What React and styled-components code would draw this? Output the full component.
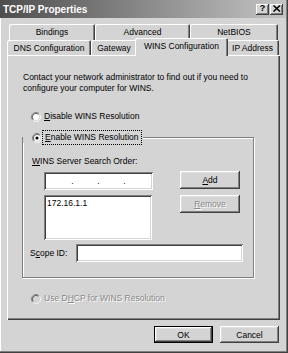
import React from 'react'
import styled, { createGlobalStyle } from 'styled-components'

const GlobalStyle = createGlobalStyle`
  html, body {
    margin: 0;
    padding: 0;
    background: #d4d4d4;
  }
  body {
    font-family: "Liberation Sans", Arial, sans-serif;
    font-size: 8.5px;
    color: #000;
  }
  * {
    box-sizing: border-box;
  }
`

const Window = styled.div`
  width: 288px;
  height: 353px;
  display: flex;
  flex-direction: column;
  background: #d4d4d4;
  box-shadow: inset -1px -1px #404040, inset -2px -2px #808080, inset 1px 0 #fff;
`

const TitleBar = styled.div`
  height: 18px;
  margin-right: 2px;
  display: flex;
  align-items: center;
  padding: 0 3px 0 3px;
  background: linear-gradient(to right, #4e4e4e, #c4c4c4);
`

const TitleText = styled.span`
  color: #fff;
  font-weight: bold;
  font-size: 10px;
`

const CaptionButtons = styled.div`
  margin-left: auto;
  display: flex;
  gap: 1px;
`

const CaptionButton = styled.div`
  width: 13px;
  height: 11px;
  display: flex;
  align-items: center;
  justify-content: center;
  background: #d4d4d4;
  box-shadow: inset -1px -1px #404040, inset 1px 1px #fff, inset -2px -2px #808080;
  font-weight: bold;
  font-size: 9px;
  line-height: 1;
  padding-bottom: 1px;
`

const Body = styled.div`
  display: flex;
  flex-direction: column;
  padding: 6px 8px 0 7px;
`

const TabStrip = styled.div`
  display: flex;
  flex-direction: column;
`

const TabRow = styled.div`
  display: flex;
  align-items: flex-end;
  height: ${(p) => p.$h}px;
  margin-left: ${(p) => p.$indent || 0}px;
`

const Tab = styled.div`
  width: ${(p) => p.$w + (p.$active ? 4 : 0)}px;
  height: ${(p) => (p.$active ? 18 : p.$h)}px;
  margin: ${(p) => (p.$active ? '0 -2px -1px -2px' : '0')};
  position: relative;
  z-index: ${(p) => (p.$active ? 2 : 0)};
  display: flex;
  align-items: center;
  justify-content: center;
  padding-bottom: ${(p) => (p.$active ? 2 : 0)}px;
  background: #d4d4d4;
  border-radius: 2px 2px 0 0;
  box-shadow: inset 1px 1px #fff, inset -1px 0 #404040, inset -2px 0 #808080;
  white-space: nowrap;
`

const Panel = styled.div`
  height: 265px;
  display: flex;
  flex-direction: column;
  padding: 17px 26px 0 15px;
  box-shadow: inset 1px 1px #fff, inset -1px -1px #404040, inset -2px -2px #808080;
`

const Info = styled.p`
  margin: 0 0 0 1px;
  line-height: 11px;
`

const RadioRow = styled.div`
  display: flex;
  align-items: center;
  gap: 2px;
  height: 11px;
  margin-top: ${(p) => p.$mt || 0}px;
  margin-left: 9px;
  color: ${(p) => (p.$disabled ? '#878787' : '#000')};
  text-shadow: ${(p) => (p.$disabled ? '1px 1px #fff' : 'none')};
`

const RadioLabel = styled.span`
  padding: 0 1px;
  line-height: 11px;
  outline: ${(p) => (p.$focus ? '1px dotted #000' : 'none')};
  outline-offset: 1px;
  white-space: nowrap;
`

const GroupBox = styled.div`
  margin-top: 15px;
  height: 141px;
  display: flex;
  flex-direction: column;
  border: 1px solid #808080;
  box-shadow: inset 1px 1px #fff, 1px 1px #fff;
`

const Legend = styled.div`
  align-self: flex-start;
  margin: -6px 0 0 0;
  padding-right: 3px;
  background: #d4d4d4;
`

const FieldLabel = styled.div`
  margin: ${(p) => p.$m || 0};
  width: ${(p) => (p.$w ? `${p.$w}px` : 'auto')};
  line-height: 11px;
  white-space: nowrap;
`

const Row = styled.div`
  display: flex;
  align-items: ${(p) => p.$align || 'flex-start'};
  margin: ${(p) => p.$m};
`

const Sunken = styled.div`
  width: ${(p) => p.$w}px;
  height: ${(p) => p.$h}px;
  background: #fff;
  box-shadow: inset 1px 1px #808080, inset -1px -1px #fff, inset 2px 2px #404040,
    inset -2px -2px #d4d4d4;
`

const IpField = styled(Sunken)`
  display: flex;
  align-items: center;
  padding: 0 4px;
`

const IpPart = styled.span`
  flex: 1;
`

const IpDot = styled.span`
  width: 3px;
  text-align: center;
  line-height: 1;
`

const ListBox = styled(Sunken)`
  padding: 3px;
  line-height: 11px;
`

const Button = styled.div`
  width: ${(p) => p.$w}px;
  height: ${(p) => p.$h}px;
  margin: ${(p) => p.$m || 0};
  display: flex;
  align-items: center;
  justify-content: center;
  background: #d4d4d4;
  border: ${(p) => (p.$default ? '1px solid #000' : 'none')};
  box-shadow: inset -1px -1px #404040, inset 1px 1px #fff, inset -2px -2px #808080,
    inset 2px 2px #dfdfdf;
  color: ${(p) => (p.$disabled ? '#878787' : '#000')};
  text-shadow: ${(p) => (p.$disabled ? '1px 1px #fff' : 'none')};
`

const Footer = styled.div`
  display: flex;
  justify-content: flex-end;
  gap: 7px;
  margin: 6px 1px 0 0;
`

function Radio({ checked, disabled }) {
  return (
    <svg width="10" height="10" viewBox="0 0 12 12">
      <circle cx="6" cy="6" r="4.2" fill={disabled ? '#d4d4d4' : '#fff'} />
      <path d="M2.11 9.89 A5.5 5.5 0 0 1 9.89 2.11" fill="none" stroke="#808080" />
      <path d="M9.89 2.11 A5.5 5.5 0 0 1 2.11 9.89" fill="none" stroke="#fff" />
      <path d="M2.82 9.18 A4.5 4.5 0 0 1 9.18 2.82" fill="none" stroke="#404040" />
      <path d="M9.18 2.82 A4.5 4.5 0 0 1 2.82 9.18" fill="none" stroke="#d4d4d4" />
      {checked && <circle cx="6" cy="6" r="1.9" fill="#000" />}
    </svg>
  )
}

const topTabs = [
  { label: 'Bindings', w: 86 },
  { label: 'Advanced', w: 95 },
  { label: 'NetBIOS', w: 88 },
]

const bottomTabs = [
  { label: 'DNS Configuration', w: 84 },
  { label: 'Gateway', w: 46 },
  { label: 'WINS Configuration', w: 89, active: true },
  { label: 'IP Address', w: 53 },
]

export default function App() {
  return (
    <>
      <GlobalStyle />
      <Window>
        <TitleBar>
          <TitleText>TCP/IP Properties</TitleText>
          <CaptionButtons>
            <CaptionButton>?</CaptionButton>
            <CaptionButton>
              <svg width="8" height="7" viewBox="0 0 8 7">
                <path d="M0.5 0.5 L7 6.5 M7 0.5 L0.5 6.5" stroke="#000" strokeWidth="1.5" />
              </svg>
            </CaptionButton>
          </CaptionButtons>
        </TitleBar>
        <Body>
          <TabStrip>
            <TabRow $h={16} $indent={2}>
              {topTabs.map((t) => (
                <Tab key={t.label} $w={t.w} $h={16}>
                  {t.label}
                </Tab>
              ))}
            </TabRow>
            <TabRow $h={15}>
              {bottomTabs.map((t) => (
                <Tab key={t.label} $w={t.w} $h={15} $active={t.active}>
                  {t.label}
                </Tab>
              ))}
            </TabRow>
          </TabStrip>
          <Panel>
            <Info>
              Contact your network administrator to find out if you need to
              <br />
              configure your computer for WINS.
            </Info>
            <RadioRow $mt={17}>
              <Radio />
              <RadioLabel>
                <u>D</u>isable WINS Resolution
              </RadioLabel>
            </RadioRow>
            <GroupBox>
              <Legend>
                <RadioRow>
                  <Radio checked />
                  <RadioLabel $focus>
                    <u>E</u>nable WINS Resolution
                  </RadioLabel>
                </RadioRow>
              </Legend>
              <FieldLabel $m="13px 0 0 9px">
                <u>W</u>INS Server Search Order:
              </FieldLabel>
              <Row $m="5px 0 0 21px">
                <IpField $w={109} $h={18}>
                  <IpPart />
                  <IpDot>.</IpDot>
                  <IpPart />
                  <IpDot>.</IpDot>
                  <IpPart />
                  <IpDot>.</IpDot>
                  <IpPart />
                </IpField>
                <Button $w={60} $h={18} $m="-1px 0 0 27px">
                  <span>
                    <u>A</u>dd
                  </span>
                </Button>
              </Row>
              <Row $m="5px 0 0 21px">
                <ListBox $w={108} $h={45}>172.16.1.1</ListBox>
                <Button $w={60} $h={18} $m="0 0 0 28px" $disabled>
                  <span>
                    <u>R</u>emove
                  </span>
                </Button>
              </Row>
              <Row $align="center" $m="4px 0 0 7px">
                <FieldLabel $w={46}>
                  S<u>c</u>ope ID:
                </FieldLabel>
                <Sunken $w={167} $h={18} />
              </Row>
            </GroupBox>
            <RadioRow $mt={15} $disabled>
              <Radio disabled />
              <RadioLabel>
                Use D<u>H</u>CP for WINS Resolution
              </RadioLabel>
            </RadioRow>
          </Panel>
          <Footer>
            <Button $w={59} $h={17} $default>
              OK
            </Button>
            <Button $w={59} $h={17}>
              Cancel
            </Button>
          </Footer>
        </Body>
      </Window>
    </>
  )
}
